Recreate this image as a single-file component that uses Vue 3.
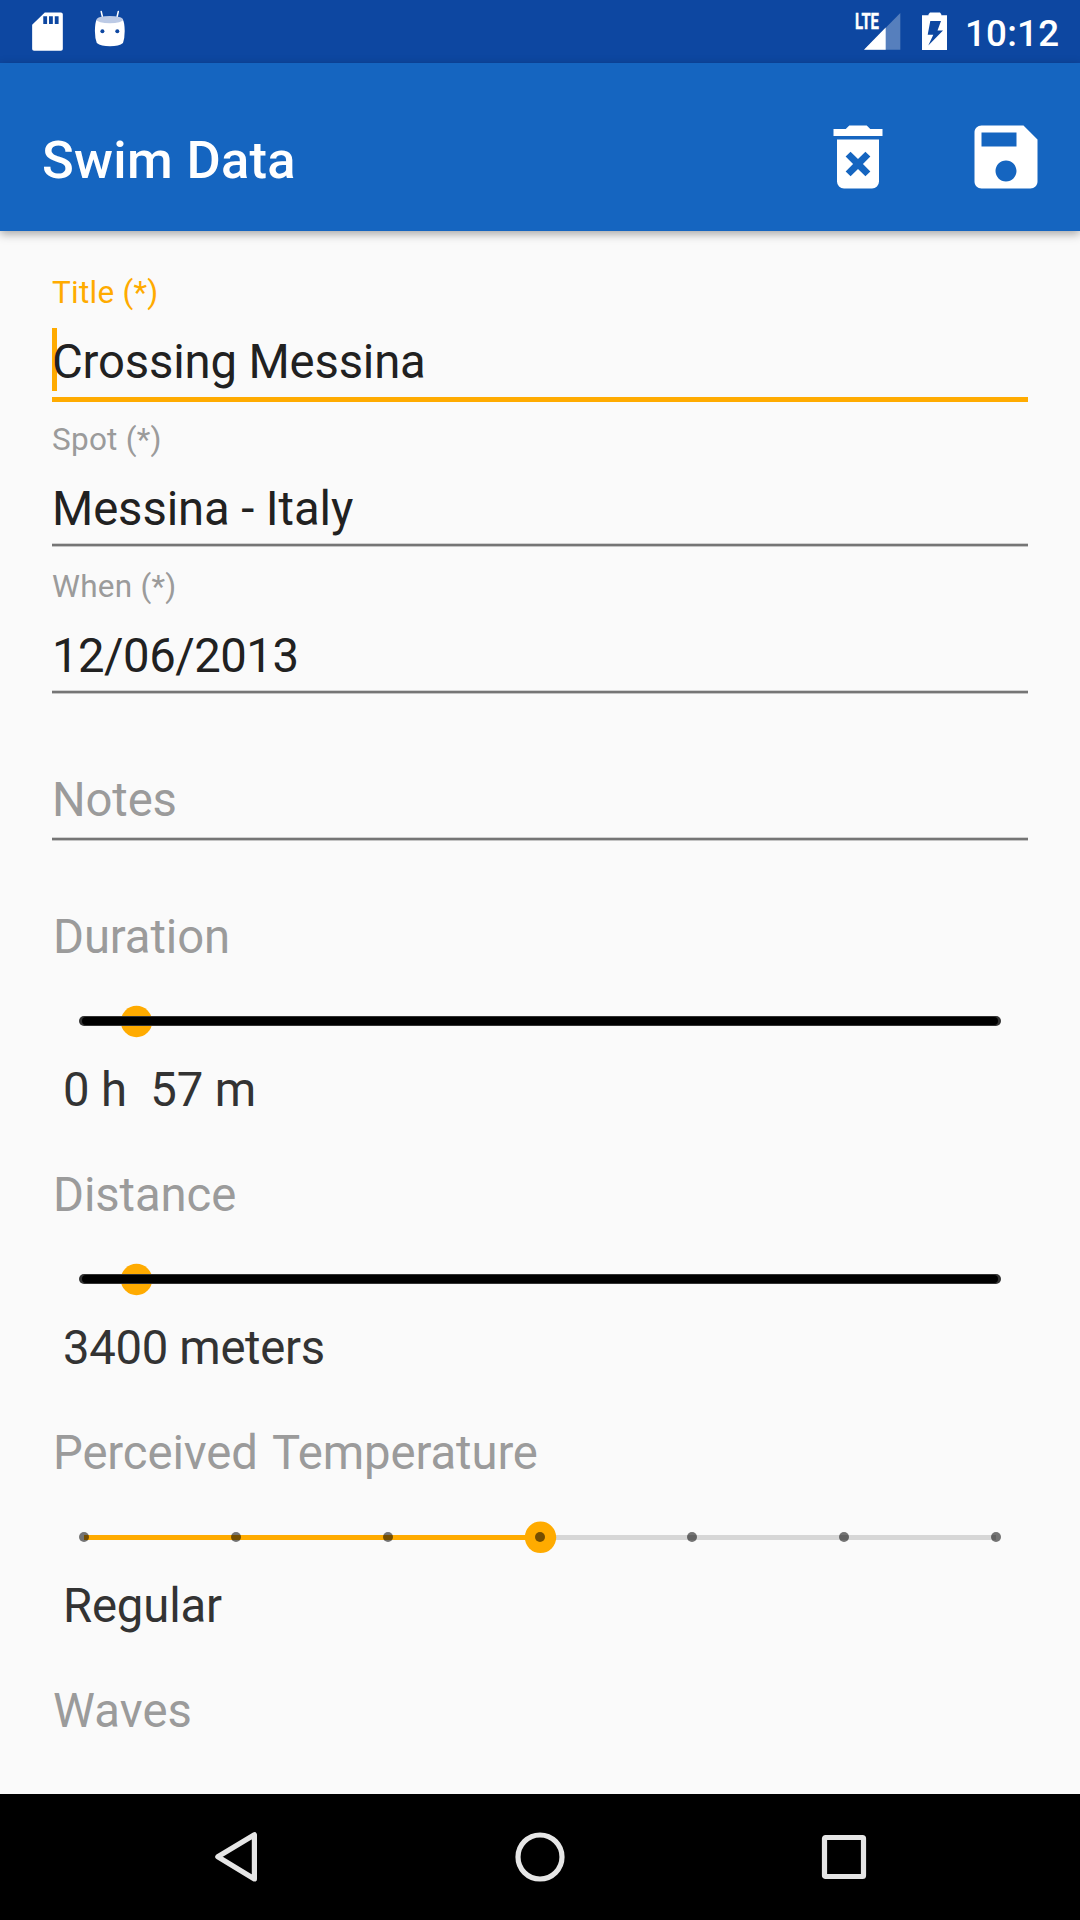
<script setup>
const fields = [
  { label: 'Title (*)', value: 'Crossing Messina', focused: true, tracking: -0.16 },
  { label: 'Spot (*)', value: 'Messina - Italy', tracking: -0.1 },
  { label: 'When (*)', value: '12/06/2013', tracking: -0.5 },
]
const sliders = [
  { label: 'Duration', value: '0 h\u00a0 57 m', thumb: 136.5, tracking: -0.1 },
  { label: 'Distance', value: '3400 meters', thumb: 136.5, tracking: -0.33 },
  { label: 'Perceived Temperature', value: 'Regular', thumb: 540.5, steps: 7, tracking: -0.15 },
]
const tickX = (n) => 84 + (n - 1) * 152
</script>

<template>
  <div class="screen">
    <div class="status">
      <svg class="sd" width="46" height="46" viewBox="0 0 24 24" fill="#fff">
        <path transform="translate(.25 .3)" d="M19 2h-8.4L4 8.4V21c0 .6.4 1 1 1h14c.6 0 1-.4 1-1V3c0-.6-.4-1-1-1zm-7.2 6h-2V4h2v4zm3 0h-2V4h2v4zm3 0h-2V4h2v4z" />
      </svg>
      <svg class="robot" width="32" height="38" viewBox="0 0 32 38">
        <path d="M7.2 1.5L8.7 8M24.3 1.5L22.8 8" stroke="#fff" stroke-width="1.5" stroke-linecap="round" />
        <path d="M2.5 9.8Q16 15.5 29 9.8Q30.6 13 30.7 21Q30.7 28 29 33Q25 36.3 16 36.3Q7 36.3 2.8 33Q.9 28 .9 21Q1 13 2.5 9.8Z" fill="#fff" />
        <ellipse cx="15.8" cy="9.6" rx="13.3" ry="3.7" fill="#bccae5" />
        <circle cx="8.4" cy="21.2" r="2" fill="#0d47a1" />
        <circle cx="23.3" cy="21.2" r="2" fill="#0d47a1" />
      </svg>
      <span class="grow"></span>
      <svg class="signal" width="50" height="60" viewBox="-3 -9 50 60">
        <path d="M45.3 2V38.7H9Z" fill="#567fbd" />
        <path d="M30.7 16.6V38.7H9Z" fill="#fff" />
        <text x="0" y="18" textLength="24" lengthAdjust="spacingAndGlyphs" class="lte">LTE</text>
      </svg>
      <svg class="battery" width="26" height="39" viewBox="0 0 26 39">
        <path d="M6.5 3.3V2.3L8 .5H18L19.3 2.3V3.3H25V38H0V3.3ZM8.3 9L5.7 22.7H11.3L6.3 33.5L21 18.4H15.5L19 9Z" fill="#fff" fill-rule="evenodd" />
      </svg>
      <span class="clock">10:12</span>
    </div>

    <header class="toolbar">
      <h1>Swim Data</h1>
      <svg class="action" width="84" height="84" viewBox="0 0 24 24" fill="#fff">
        <path d="M6,19A2,2 0 0,0 8,21H16A2,2 0 0,0 18,19V7H6V19M8.46,11.88L9.87,10.47L12,12.59L14.12,10.47L15.53,11.88L13.41,14L15.53,16.12L14.12,17.53L12,15.41L9.88,17.53L8.47,16.12L10.59,14L8.46,11.88M15.5,4L14.5,3H9.5L8.5,4H5V6H19V4H15.5Z" />
      </svg>
      <svg class="action save" width="84" height="84" viewBox="0 0 24 24" fill="#fff">
        <path d="M17 3H5c-1.11 0-2 .9-2 2v14c0 1.1.89 2 2 2h14c1.1 0 2-.9 2-2V7l-4-4zm-5 16c-1.66 0-3-1.34-3-3s1.34-3 3-3 3 1.34 3 3-1.34 3-3 3zm3-10H5V5h10v4z" />
      </svg>
    </header>

    <main class="content">
      <div v-for="f in fields" :key="f.label" class="field" :class="{ focused: f.focused }">
        <div class="label">{{ f.label }}</div>
        <div class="value" :style="{ letterSpacing: f.tracking + 'px' }">
          <i v-if="f.focused" class="caret"></i><span>{{ f.value }}</span>
        </div>
        <div class="line"></div>
      </div>
      <div class="field notes">
        <div class="hint">Notes</div>
        <div class="line"></div>
      </div>

      <section v-for="s in sliders" :key="s.label" class="group">
        <div class="name">{{ s.label }}</div>
        <svg class="slider" width="1080" height="97" viewBox="0 0 1080 97">
          <template v-if="s.steps">
            <rect x="84" y="54" width="912" height="5" fill="#d6d6d6" />
            <rect x="84" y="54" :width="s.thumb - 84" height="5" fill="#ffab00" />
            <circle :cx="s.thumb" cy="56.3" r="15.7" fill="#ffab00" />
            <circle v-for="n in s.steps" :key="n" :cx="tickX(n)" cy="56" r="5" fill="#000" fill-opacity=".54" />
          </template>
          <template v-else>
            <circle :cx="s.thumb" cy="56.5" r="15.7" fill="#ffab00" />
            <rect x="79" y="51" width="922" height="10" rx="5" fill="#333" />
            <rect x="82" y="52" width="916" height="8" rx="4" fill="#000" />
          </template>
        </svg>
        <div class="reading" :style="{ letterSpacing: s.tracking + 'px' }">{{ s.value }}</div>
      </section>
      <section class="group"><div class="name waves">Waves</div></section>
    </main>

    <nav class="navbar">
      <svg width="56" height="56" viewBox="0 0 56 56"><path d="M46.4 5.8V49.9L9.8 27.8Z" /></svg>
      <svg width="56" height="56" viewBox="0 0 56 56"><circle cx="28" cy="28" r="22" /></svg>
      <svg width="56" height="56" viewBox="0 0 56 56"><rect x="8.5" y="8.5" width="39" height="39" rx="1" /></svg>
    </nav>
  </div>
</template>

<style>
body {
  margin: 0;
}
</style>

<style scoped>
.screen {
  width: 1080px;
  height: 1920px;
  display: flex;
  flex-direction: column;
  overflow: hidden;
  background: #fafafa;
  font-family: Roboto, sans-serif;
}
.status {
  flex: none;
  height: 63px;
  display: flex;
  align-items: flex-start;
  background: #0d47a1;
}
.sd {
  margin: 8px 0 0 24px;
}
.robot {
  margin: 10px 0 0 24px;
}
.grow {
  flex: 1;
}
.signal {
  margin: 2px 20px 0 0;
}
.lte {
  font: 700 22px Roboto, sans-serif;
  fill: #fff;
  stroke: #fff;
  stroke-width: 0.4;
}
.battery {
  margin: 12px 0 0;
}
.clock {
  width: 115px;
  margin-left: 17px;
  line-height: 43px;
  margin-top: 12px;
  font-size: 36.75px;
  font-weight: 500;
  letter-spacing: 0.2px;
  color: #fff;
}
.toolbar {
  position: relative;
  flex: none;
  height: 168px;
  box-sizing: border-box;
  padding: 20px 32px 0 42px;
  display: flex;
  align-items: center;
  background: #1565c0;
  box-shadow: 0 3px 9px rgba(0, 0, 0, 0.34);
}
h1 {
  flex: 1;
  margin: 6px 0 0;
  font-size: 52.5px;
  line-height: 62px;
  font-weight: 500;
  letter-spacing: 0.3px;
  color: #fff;
}
.action {
  display: block;
}
.save {
  margin-left: 64px;
}
.content {
  flex: 1;
  min-height: 0;
  overflow: hidden;
  padding-top: 24px;
}
.field {
  height: 147px;
  box-sizing: border-box;
  padding: 19px 52px 0;
}
.label {
  height: 36px;
  line-height: 37px;
  font-size: 31.5px;
  letter-spacing: 0.25px;
  color: #9b9b9b;
}
.focused .label {
  color: #ffab00;
}
.value {
  position: relative;
  margin-top: 24px;
  height: 56px;
  line-height: 56px;
  font-size: 47.25px;
  color: #212121;
}
.value span {
  position: relative;
}
.caret {
  position: absolute;
  left: 0;
  top: -6px;
  width: 5px;
  height: 63px;
  background: #ffab00;
}
.line {
  margin-top: 6px;
  height: 2px;
  border-top: 1px solid #d0d0d0;
  border-bottom: 1px solid #c4c4c4;
  background: #757575;
}
.focused .line {
  margin-top: 7px;
  height: 5px;
  border: 0;
  background: #ffab00;
}
.notes {
  padding-top: 76px;
  margin-bottom: 66px;
}
.hint {
  height: 59px;
  line-height: 56px;
  font-size: 47.25px;
  letter-spacing: -0.15px;
  color: #9b9b9b;
}
.group {
  height: 258px;
}
.name,
.reading {
  height: 56px;
  line-height: 56px;
  font-size: 47.25px;
  padding-left: 53px;
  color: #9b9b9b;
}
.name {
  letter-spacing: -0.1px;
  word-spacing: 3.5px;
}
.waves {
  letter-spacing: 0.1px;
}
.slider {
  display: block;
}
.reading {
  padding-left: 63px;
  color: #333;
}
.navbar {
  flex: none;
  height: 126px;
  display: flex;
  justify-content: center;
  align-items: center;
  gap: 248px;
  background: #000;
}
.navbar svg {
  fill: none;
  stroke: #e6e6e6;
  stroke-width: 5.2;
  stroke-linejoin: round;
}
</style>
